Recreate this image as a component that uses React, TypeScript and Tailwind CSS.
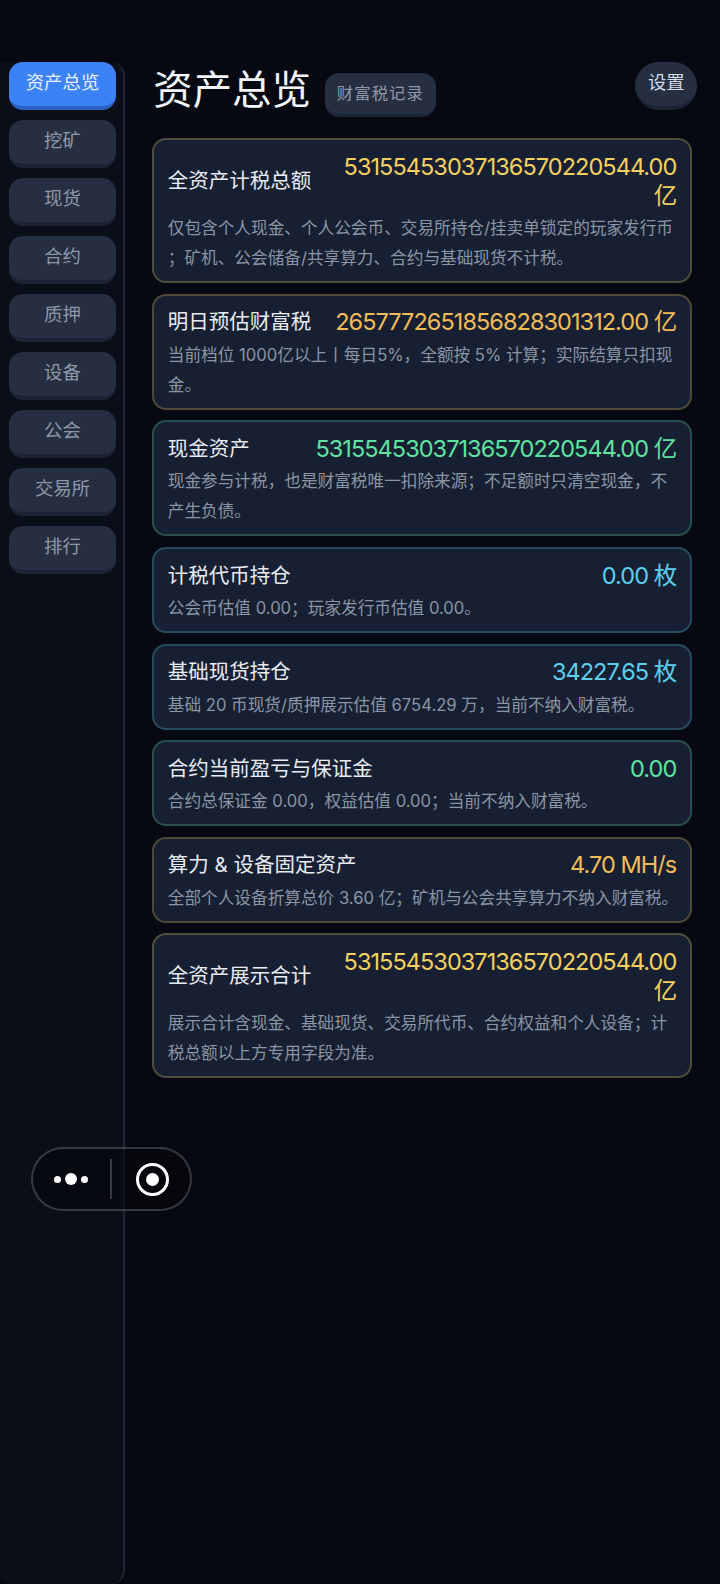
const font = { fontFamily: 'Inter, "Noto Sans CJK SC", sans-serif' };

const navItems = ["资产总览", "挖矿", "现货", "合约", "质押", "设备", "公会", "交易所", "排行"];

type CardProps = {
  title: string;
  value: string;
  valueColor: string;
  border: string;
  desc: string;
};

const cards: CardProps[] = [
  {
    title: "全资产计税总额",
    value: "53155453037136570220544.00 亿",
    valueColor: "text-[#f5d061]",
    border: "border-[#4f4d3d]",
    desc: "仅包含个人现金、个人公会币、交易所持仓/挂卖单锁定的玩家发行币\n；矿机、公会储备/共享算力、合约与基础现货不计税。",
  },
  {
    title: "明日预估财富税",
    value: "2657772651856828301312.00 亿",
    valueColor: "text-[#f2bd57]",
    border: "border-[#4f4939]",
    desc: "当前档位 1000亿以上丨每日5%，全额按 5% 计算；实际结算只扣现金。",
  },
  {
    title: "现金资产",
    value: "53155453037136570220544.00 亿",
    valueColor: "text-[#5fe3a1]",
    border: "border-[#2a4f4c]",
    desc: "现金参与计税，也是财富税唯一扣除来源；不足额时只清空现金，不产生负债。",
  },
  {
    title: "计税代币持仓",
    value: "0.00 枚",
    valueColor: "text-[#5ccfee]",
    border: "border-[#274a5c]",
    desc: "公会币估值 0.00；玩家发行币估值 0.00。",
  },
  {
    title: "基础现货持仓",
    value: "34227.65 枚",
    valueColor: "text-[#5ccfee]",
    border: "border-[#274a5c]",
    desc: "基础 20 币现货/质押展示估值 6754.29 万，当前不纳入财富税。",
  },
  {
    title: "合约当前盈亏与保证金",
    value: "0.00",
    valueColor: "text-[#5fe3a1]",
    border: "border-[#2a4f4c]",
    desc: "合约总保证金 0.00，权益估值 0.00；当前不纳入财富税。",
  },
  {
    title: "算力 & 设备固定资产",
    value: "4.70 MH/s",
    valueColor: "text-[#f2bd57]",
    border: "border-[#4f4939]",
    desc: "全部个人设备折算总价 3.60 亿；矿机与公会共享算力不纳入财富税。",
  },
  {
    title: "全资产展示合计",
    value: "53155453037136570220544.00 亿",
    valueColor: "text-[#f5d061]",
    border: "border-[#4f4d3d]",
    desc: "展示合计含现金、基础现货、交易所代币、合约权益和个人设备；计税总额以上方专用字段为准。",
  },
];

function Card({ title, value, valueColor, border, desc }: CardProps) {
  return (
    <div className={`rounded-[14px] border-2 bg-[#172032] pt-[11.5px] pr-[14px] pb-[8px] pl-[13.5px] ${border}`}>
      <div className="flex items-center justify-between gap-5">
        <span className="shrink-0 text-[20.5px] leading-[29px] text-[#e8ecf2]">{title}</span>
        <span className={`text-right text-[23.5px] leading-[29px] tracking-[-0.95px] ${valueColor}`}>{value}</span>
      </div>
      <p className="mt-[3.5px] -mr-[4px] text-[16.65px] leading-[30px] whitespace-pre-line text-[#8b95a5]">{desc}</p>
    </div>
  );
}

export default function App() {
  return (
    <div style={font} className="relative flex h-[1584px] w-[720px] overflow-hidden bg-[#060911] pt-[62px]">
      <div className="flex w-[125px] shrink-0 flex-col gap-[10px] rounded-tr-[14px] rounded-br-[14px] rounded-bl-[14px] border-r-2 border-[#1e2735] bg-[#0a0e18] pr-[7px] pl-[9px]">
        {navItems.map((item, i) => (
          <div
            key={item}
            className={`flex h-[48px] items-center justify-center rounded-[14px] border-b-4 pb-[2px] text-[18.4px] ${
              i === 0
                ? "border-[#2d62c4] bg-[#3b82f6] text-[#e8f0ff]"
                : "border-[#1c2433] bg-[#262f42] text-[#8f98a8]"
            }`}
          >
            {item}
          </div>
        ))}
      </div>

      <div className="flex min-w-0 flex-1 flex-col pr-[27.7px] pl-[27.3px]">
        <div className="relative flex h-[76.3px] items-start">
          <h1 className="ml-[1px] text-[39.4px] leading-[56px] text-[#f3f5f8]">资产总览</h1>
          <span className="mt-[11px] ml-[14px] flex h-[44px] items-center rounded-[14px] border-b-[3px] border-[#1c2433] bg-[#262f42] px-[12px] text-[16.4px] tracking-[1px] text-[#8f98a8]">
            财富税记录
          </span>
          <span className="absolute top-0 right-[-5px] flex h-[48px] w-[62px] items-center justify-center rounded-full border-b-4 border-[#1c2433] bg-[#262f42] pb-[3px] text-[18.4px] text-[#d5dae3]">
            设置
          </span>
        </div>
        <div className="flex flex-col gap-[10.6px]">
          {cards.map((card) => (
            <Card key={card.title} {...card} />
          ))}
        </div>
      </div>

      <div className="absolute top-[1147px] left-[31px] flex h-[64px] w-[161px] items-center rounded-full border-2 border-white/20 bg-[#05070c]/60">
        <div className="flex w-[77px] items-center justify-center gap-[4px] pr-[1px]">
          <span className="h-[7px] w-[7px] rounded-full bg-white" />
          <span className="h-[12px] w-[12px] rounded-full bg-white" />
          <span className="h-[7px] w-[7px] rounded-full bg-white" />
        </div>
        <div className="h-[40px] w-[2px] bg-white/20" />
        <div className="flex flex-1 items-center justify-center pl-[2px]">
          <span className="flex h-[33px] w-[33px] items-center justify-center rounded-full border-[3px] border-white">
            <span className="h-[13px] w-[13px] rounded-full bg-white" />
          </span>
        </div>
      </div>
    </div>
  );
}
